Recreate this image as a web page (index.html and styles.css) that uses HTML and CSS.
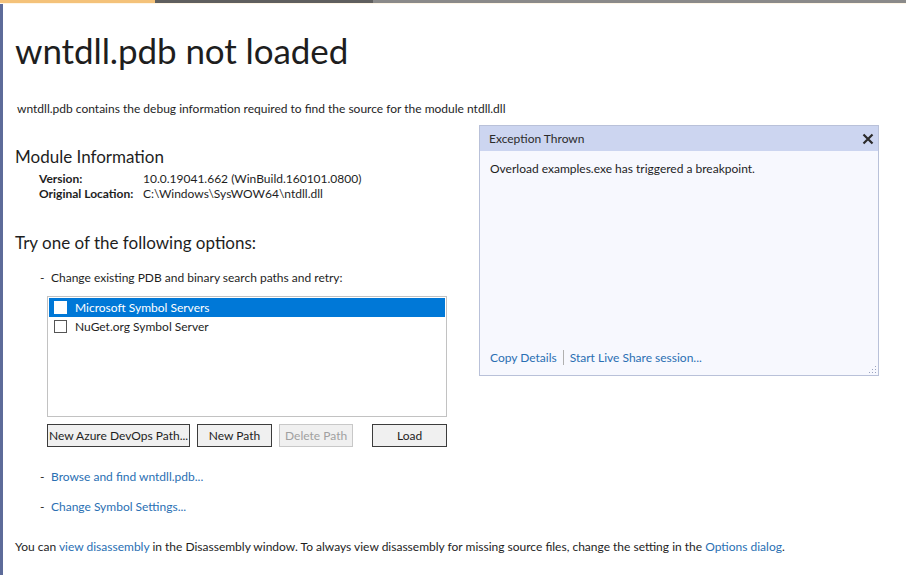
FILE: index.html
```html
<!DOCTYPE html>
<html>
<head>
<meta charset="utf-8">
<link rel="stylesheet" href="styles.css">
</head>
<body>
<div class="topbar"><div class="tab-active"></div><div class="tab-dark"></div><div class="tab-rest"></div></div>
<div class="frame">
  <div class="strip"></div>
  <main class="content">
    <h1 class="title">wntdll.pdb not loaded</h1>
    <p class="desc">wntdll.pdb contains the debug information required to find the source for the module ntdll.dll</p>
    <h2 class="section">Module Information</h2>
    <div class="info">
      <div class="info-label">Version:</div><div class="info-value">10.0.19041.662 (WinBuild.160101.0800)</div>
      <div class="info-label">Original Location:</div><div class="info-value">C:\Windows\SysWOW64\ntdll.dll</div>
    </div>
    <h2 class="section options">Try one of the following options:</h2>
    <div class="option first"><span class="dash">-</span><span>Change existing PDB and binary search paths and retry:</span></div>
    <div class="paths">
      <div class="listbox">
        <div class="item selected"><span class="check"></span>Microsoft Symbol Servers</div>
        <div class="item"><span class="check"></span>NuGet.org Symbol Server</div>
      </div>
      <div class="buttons">
        <button class="btn w-azure">New Azure DevOps Path...</button>
        <button class="btn w-path">New Path</button>
        <button class="btn w-path disabled">Delete Path</button>
        <button class="btn w-path load">Load</button>
      </div>
    </div>
    <div class="option link-opt"><span class="dash">-</span><a class="link">Browse and find wntdll.pdb...</a></div>
    <div class="option link-opt second"><span class="dash">-</span><a class="link">Change Symbol Settings...</a></div>
    <p class="footer">You can <a class="link">view disassembly</a> in the Disassembly window. To always view disassembly for missing source files, change the setting in the <a class="link">Options dialog</a>.</p>
  </main>
</div>
<div class="popup">
  <div class="popup-head"><span>Exception Thrown</span>
    <svg class="close" width="12" height="12" viewBox="0 0 12 12"><path d="M1.5 1.5 L10.5 10.5 M10.5 1.5 L1.5 10.5" stroke="#2b2b2b" stroke-width="2.2"/></svg>
  </div>
  <div class="popup-body">
    <div class="popup-msg">Overload examples.exe has triggered a breakpoint.</div>
    <div class="popup-links"><a class="link">Copy Details</a><span class="sep"></span><a class="link">Start Live Share session...</a></div>
    <svg class="grip" width="10" height="10" viewBox="0 0 10 10" fill="#9aa3bf">
      <rect x="8" y="2" width="1" height="1"/><rect x="8" y="5" width="1" height="1"/><rect x="8" y="8" width="1" height="1"/>
      <rect x="5" y="5" width="1" height="1"/><rect x="5" y="8" width="1" height="1"/><rect x="2" y="8" width="1" height="1"/>
    </svg>
  </div>
</div>
</body>
</html>
```
FILE: styles.css
```css
html, body { margin: 0; padding: 0; background: #fff; }
body { font-family: Lato, "Noto Sans", sans-serif; color: #1e1e1e; width: 906px; height: 575px; overflow: hidden; position: relative; }
.topbar { display: flex; height: 3px; border-bottom: 1px solid #fff6e6; }
.tab-active { width: 155px; background: #f4c27a; }
.tab-dark { width: 218px; background: #5f5f5f; }
.tab-rest { flex: 1; background: #8a8a8a; }
.frame { display: flex; height: 571px; }
.strip { width: 3px; background: #5d6b99; flex: none; }
.content { padding-left: 12px; flex: 1; }
.title { font-weight: 400; font-size: 35px; line-height: 40px; margin: 26px 0 0 0; letter-spacing: -0.1px; }
.desc { font-size: 12px; margin: 31px 0 0 2px; line-height: 16px; }
.section { font-weight: 400; font-size: 17px; line-height: 22px; margin: 29px 0 3px 0; }
.info { display: grid; grid-template-columns: 104px auto; margin-left: 24px; font-size: 12px; line-height: 15px; }
.info-label { font-weight: 700; }
.options { margin-top: 31px; }
.option { display: flex; font-size: 12px; line-height: 16px; margin-left: 25px; }
.option.first { margin-top: 16px; }
.dash { width: 11px; }
.paths { margin: 10px 0 0 32px; width: 400px; }
.listbox { height: 117px; border: 1px solid #c2c2c2; padding: 1px; font-size: 12px; }
.item { display: flex; align-items: center; height: 19px; padding-left: 5px; }
.item.selected { background: #0078d7; color: #fff; }
.check { width: 11px; height: 11px; border: 1px solid #555; background: #fff; margin-right: 8px; }
.item.selected .check { border-color: #fff; }
.buttons { display: flex; margin-top: 7px; }
.btn { font-family: inherit; font-size: 12px; height: 23px; background: #f0f0f0; border: 1px solid #3c3c3c; color: #1e1e1e; padding: 0; margin-right: 7px; }
.w-azure { width: 144px; }
.w-path { width: 75px; }
.btn.disabled { color: #a0a0a0; border-color: #c8c8c8; }
.btn.load { margin-left: 12px; margin-right: 0; }
.link { color: #2a6fb3; text-decoration: none; }
.link-opt { margin-top: 22px; }
.link-opt.second { margin-top: 14px; }
.footer { font-size: 12px; line-height: 16px; margin: 24px 0 0 0; }
.popup { position: absolute; left: 479px; top: 125px; width: 398px; height: 249px; border: 1px solid #b9c1d9; background: #f7f8fe; display: flex; flex-direction: column; font-size: 12px; }
.popup-head { height: 25px; background: #ccd5f0; display: flex; align-items: center; justify-content: space-between; padding: 0 4px 0 9px; color: #2b2b2b; }
.popup-body { flex: 1; display: flex; flex-direction: column; justify-content: space-between; padding: 10px 10px 10px 10px; position: relative; }
.popup-links { display: flex; align-items: center; }
.sep { width: 1px; height: 15px; background: #b0b0b0; margin: 0 6px; }
.grip { position: absolute; right: 1px; bottom: 1px; }
```
